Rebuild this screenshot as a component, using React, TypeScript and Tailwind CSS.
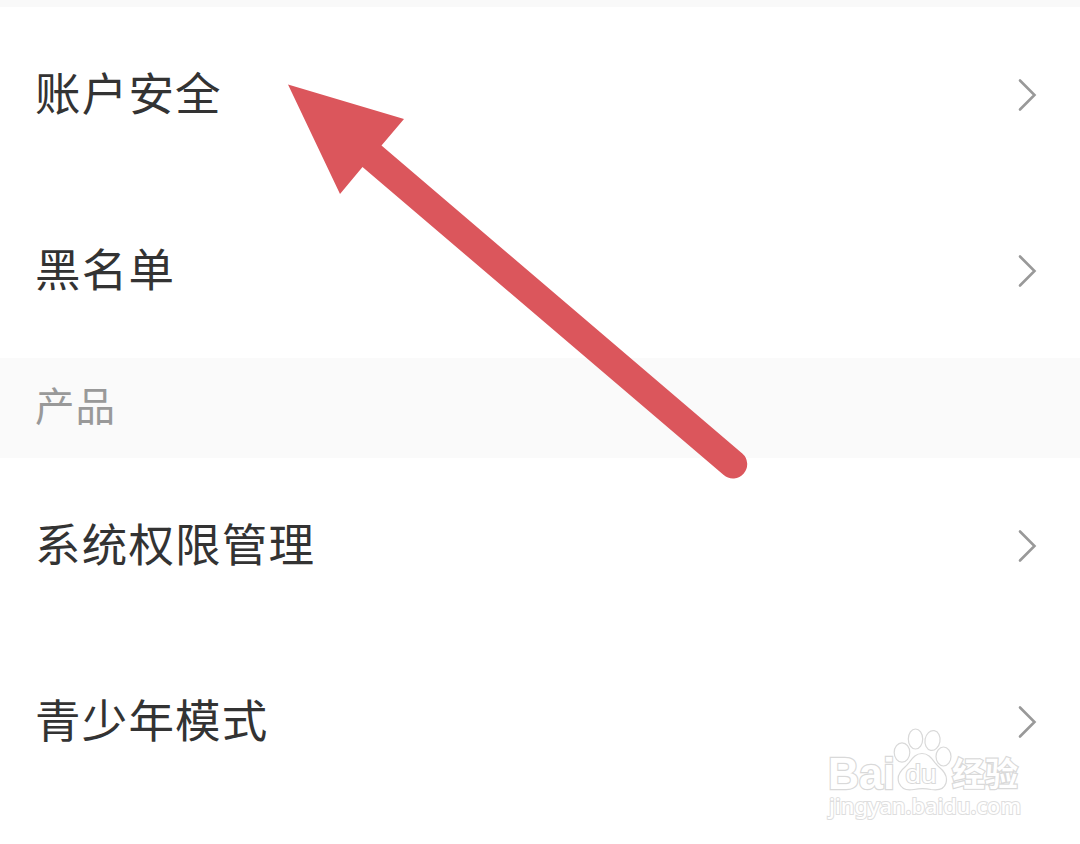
const accountItems = ["账户安全", "黑名单"];
const productItems = ["系统权限管理", "青少年模式"];

function Chevron() {
  return (
    <svg width="20" height="34" viewBox="0 0 20 34" fill="none">
      <path
        d="M2 2.5L16.5 17L2 31.5"
        stroke="#999999"
        strokeWidth="2.6"
        strokeLinecap="round"
      />
    </svg>
  );
}

function Row({ label }: { label: string }) {
  return (
    <li className="flex h-44 items-center justify-between pl-[35px] pr-[42px]">
      <span className="pb-[7px] text-[45.5px] leading-none tracking-[1.2px] text-[#333333]">
        {label}
      </span>
      <Chevron />
    </li>
  );
}

function Arrow() {
  return (
    <svg
      className="absolute left-[280px] top-[76px]"
      width="480"
      height="410"
      viewBox="280 76 480 410"
    >
      <path
        d="M288 84.5L404 119L381.5 145.5L742.3 453.5A14.2 14.2 0 0 1 723.7 475L362.5 167L340 194Z"
        fill="#db565c"
      />
    </svg>
  );
}

function Watermark() {
  return (
    <svg
      className="absolute left-[820px] top-[720px]"
      width="210"
      height="110"
      viewBox="820 720 210 110"
      fill="#ffffff"
      stroke="#d9d9d9"
      strokeWidth="1.2"
    >
      <g strokeWidth="2.4" style={{ paintOrder: "stroke" }}>
        <text
          x="828"
          y="788.5"
          textLength="67"
          lengthAdjust="spacingAndGlyphs"
          className="font-['Liberation_Sans'] text-[44px] font-bold"
        >
          Bai
        </text>
        <text
          x="952"
          y="786"
          textLength="66"
          lengthAdjust="spacingAndGlyphs"
          className="font-['Noto_Sans_CJK_SC'] text-[33px] font-bold"
        >
          经验
        </text>
        <text
          x="829"
          y="814"
          textLength="192"
          lengthAdjust="spacingAndGlyphs"
          stroke="#dedede"
          strokeWidth="2"
          className="font-['Noto_Sans'] text-[22px] font-medium"
        >
          jingyan.baidu.com
        </text>
      </g>
      <ellipse cx="902" cy="752.5" rx="7.8" ry="9.7" />
      <ellipse cx="915.5" cy="739" rx="7.2" ry="10" />
      <ellipse cx="932.5" cy="740.5" rx="7.5" ry="10" transform="rotate(10 932.5 740.5)" />
      <ellipse cx="943.5" cy="756.5" rx="7.5" ry="9.5" />
      <path d="M922 753.5C913 753.5 911 762 905 767C899 772 897 778 899 783C902 790 909 790.5 914 789.5C919 788.5 926 788.5 931 789.5C937 790.5 944 789.5 946 783C948 776 944 771 939 767C933 762 931 753.5 922 753.5Z" />
      <text
        x="905.5"
        y="783"
        textLength="31"
        lengthAdjust="spacingAndGlyphs"
        strokeWidth="2"
        style={{ paintOrder: "stroke" }}
        className="font-['Liberation_Sans'] text-[26px]"
      >
        du
      </text>
    </svg>
  );
}

export default function App() {
  return (
    <main className="relative h-[844px] w-[1080px] overflow-hidden bg-white font-['Noto_Sans_CJK_SC',sans-serif]">
      <div className="h-[7px] bg-[#f9f9f9]" />
      <ul className="h-[351px]">
        {accountItems.map((label) => (
          <Row key={label} label={label} />
        ))}
      </ul>
      <h2 className="flex h-[100px] items-center bg-[#fafafa] pb-[9px] pl-[35px] text-[39.5px] leading-none tracking-[1px] text-[#999999]">
        产品
      </h2>
      <ul>
        {productItems.map((label) => (
          <Row key={label} label={label} />
        ))}
      </ul>
      <Watermark />
      <Arrow />
    </main>
  );
}
